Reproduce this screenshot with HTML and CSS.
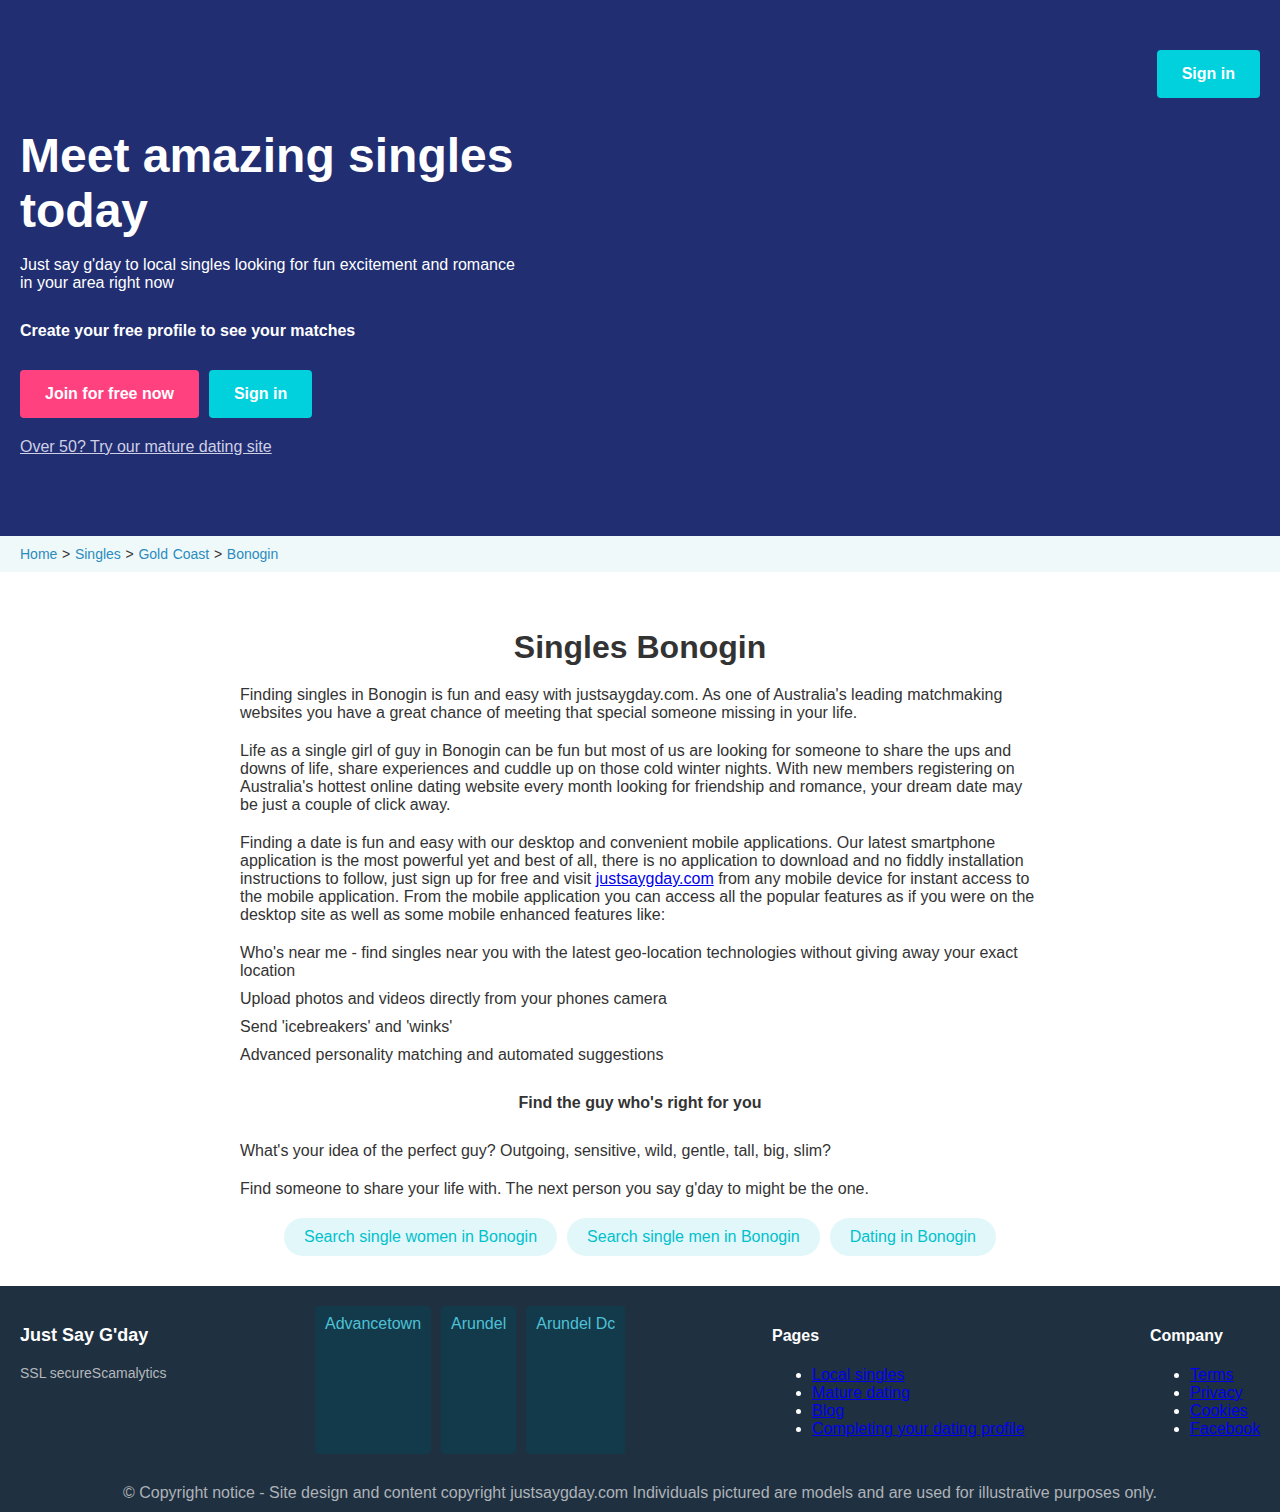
FILE: index.html
```html
<!DOCTYPE html>
<html lang="en">
<head>
<meta charset="utf-8">
<title>Singles Bonogin</title>
<link rel="stylesheet" href="styles.css">
</head>
<body>
<header class="hero">
  <div class="topbar">
    <a class="btn btn-cyan" href="#">Sign in</a>
  </div>
  <div class="hero-content">
    <h1 class="hero-title">Meet amazing singles today</h1>
    <p class="hero-sub">Just say g'day to local singles looking for fun excitement and romance in your area right now</p>
    <p class="hero-cta">Create your free profile to see your matches</p>
    <div class="hero-buttons">
      <a class="btn btn-pink" href="#">Join for free now</a>
      <a class="btn btn-cyan" href="#">Sign in</a>
    </div>
    <a class="mature-link" href="#">Over 50? Try our mature dating site</a>
  </div>
</header>

<nav class="breadcrumb">
  <a href="#">Home</a> &gt; <a href="#">Singles</a> &gt; <a href="#">Gold Coast</a> &gt; <a href="#">Bonogin</a>
</nav>

<main class="content">
  <h2 class="page-title">Singles Bonogin</h2>
  <p>Finding singles in Bonogin is fun and easy with justsaygday.com. As one of Australia's leading matchmaking websites you have a great chance of meeting that special someone missing in your life.</p>
  <p>Life as a single girl of guy in Bonogin can be fun but most of us are looking for someone to share the ups and downs of life, share experiences and cuddle up on those cold winter nights. With new members registering on Australia's hottest online dating website every month looking for friendship and romance, your dream date may be just a couple of click away.</p>
  <p>Finding a date is fun and easy with our desktop and convenient mobile applications. Our latest smartphone application is the most powerful yet and best of all, there is no application to download and no fiddly installation instructions to follow, just sign up for free and visit <a class="inline-link" href="#">justsaygday.com</a> from any mobile device for instant access to the mobile application. From the mobile application you can access all the popular features as if you were on the desktop site as well as some mobile enhanced features like:</p>
  <ul class="features">
    <li>Who's near me - find singles near you with the latest geo-location technologies without giving away your exact location</li>
    <li>Upload photos and videos directly from your phones camera</li>
    <li>Send 'icebreakers' and 'winks'</li>
    <li>Advanced personality matching and automated suggestions</li>
  </ul>
  <p class="subhead">Find the guy who's right for you</p>
  <p>What's your idea of the perfect guy? Outgoing, sensitive, wild, gentle, tall, big, slim?</p>
  <p>Find someone to share your life with. The next person you say g'day to might be the one.</p>
  <div class="pills">
    <a class="pill" href="#">Search single women in Bonogin</a>
    <a class="pill" href="#">Search single men in Bonogin</a>
    <a class="pill" href="#">Dating in Bonogin</a>
  </div>
</main>

<footer class="footer">
  <div class="footer-row">
    <div class="footer-brand">
      <div class="brand-name">Just Say G'day</div>
      <div class="brand-note">SSL secureScamalytics</div>
    </div>
    <div class="tiles">
      <a class="tile" href="#">Advancetown</a>
      <a class="tile" href="#">Arundel</a>
      <a class="tile" href="#">Arundel Dc</a>
    </div>
    <div class="footer-col">
      <h4 class="col-title">Pages</h4>
      <ul class="col-list">
        <li><a href="#">Local singles</a></li>
        <li><a href="#">Mature dating</a></li>
        <li><a href="#">Blog</a></li>
        <li><a href="#">Completing your dating profile</a></li>
      </ul>
    </div>
    <div class="footer-col">
      <h4 class="col-title">Company</h4>
      <ul class="col-list">
        <li><a href="#">Terms</a></li>
        <li><a href="#">Privacy</a></li>
        <li><a href="#">Cookies</a></li>
        <li><a href="#">Facebook</a></li>
      </ul>
    </div>
  </div>
  <p class="copyright">© Copyright notice - Site design and content copyright justsaygday.com Individuals pictured are models and are used for illustrative purposes only.</p>
</footer>
</body>
</html>
```

FILE: styles.css
```css
* { box-sizing: border-box; }

body {
  margin: 0;
  font-family: "Liberation Sans", Arial, sans-serif;
  font-size: 16px;
  color: #333;
  background: #fff;
}

.hero {
  background: #212e72;
  color: #fff;
  height: 536px;
  padding: 50px 20px 0;
}

.topbar {
  display: flex;
  justify-content: flex-end;
}

.btn {
  display: inline-block;
  padding: 15px 25px;
  border-radius: 4px;
  color: #fff;
  font-weight: bold;
  font-size: 16px;
  text-decoration: none;
  line-height: 18px;
}

.btn-cyan { background: #00d1dd; }
.btn-pink { background: #ff4180; }

.hero-content {
  width: 500px;
  padding-top: 30px;
}

.hero-title {
  margin: 0;
  font-size: 48px;
  font-weight: bold;
  line-height: 55px;
}

.hero-sub {
  margin: 18px 0 0;
  line-height: 18px;
}

.hero-cta {
  margin: 30px 0 0;
  font-weight: bold;
  line-height: 18px;
}

.hero-buttons {
  display: flex;
  gap: 10px;
  margin-top: 30px;
}

.mature-link {
  display: inline-block;
  margin-top: 20px;
  color: #cfd0e6;
  text-decoration: underline;
  line-height: 18px;
}

.breadcrumb {
  background: #f0f9f9;
  padding: 10px 20px;
  font-size: 14px;
  line-height: 16px;
  color: #333;
  word-spacing: 0.8px;
}

.breadcrumb a {
  color: #2a8bbf;
  text-decoration: none;
}

.content {
  width: 800px;
  margin: 0 auto;
  padding: 57px 0 30px;
  line-height: 18px;
}

.page-title {
  margin: 0 0 20px;
  text-align: center;
  font-size: 32px;
  line-height: 37px;
  color: #333;
}

.content p {
  margin: 0 0 20px;
}

.inline-link { color: #0000ee; }

.features {
  list-style: none;
  margin: 0 0 30px;
  padding: 0;
}

.features li {
  margin-bottom: 10px;
}

.content .subhead {
  text-align: center;
  font-weight: bold;
  margin: 0 0 30px;
}

.pills {
  display: flex;
  justify-content: center;
  gap: 10px;
  margin-top: 20px;
}

.pill {
  display: inline-block;
  padding: 10px 20px;
  border-radius: 19px;
  background: #e2f7fa;
  color: #00c1cc;
  text-decoration: none;
  line-height: 18px;
}

.footer {
  background: #1f3040;
  color: #fff;
  padding: 20px 20px 11px;
}

.footer-row {
  display: grid;
  grid-template-columns: 295px 457px 378px 1fr;
}

.brand-name {
  margin-top: 19px;
  font-size: 18px;
  font-weight: bold;
  line-height: 21px;
}

.brand-note {
  margin-top: 19px;
  font-size: 14px;
  color: #b4b8bd;
  line-height: 16px;
}

.tiles {
  display: flex;
  gap: 10px;
  align-items: stretch;
}

.tile {
  background: #133a4a;
  border-radius: 4px;
  padding: 9px 10px;
  color: #4ec1d6;
  text-decoration: none;
  line-height: 18px;
}

.col-title {
  margin: 21px 0;
  font-size: 16px;
  line-height: 18px;
}

.col-list {
  margin: 0 0 16px;
  padding-left: 40px;
  line-height: 18px;
}

.col-list a { color: #0000ee; }

.copyright {
  margin: 30px 0 0;
  text-align: center;
  color: #aeb3b8;
  line-height: 18px;
}
```
